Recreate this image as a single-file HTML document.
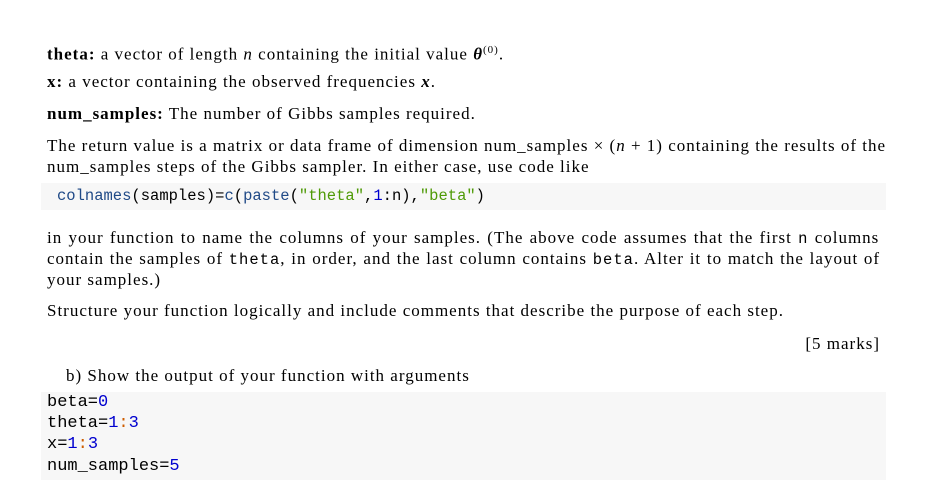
<!DOCTYPE html>
<html><head><meta charset="utf-8"><style>
body{margin:0;width:930px;height:493px;background:#fff;position:relative;font-family:"Liberation Serif",serif;font-size:17px;color:#000;overflow:hidden}
.l{position:absolute;left:47px;white-space:nowrap;line-height:20px;letter-spacing:1px}
.code{position:absolute;left:41px;width:845px;background:#f7f7f7}
.m{font-family:"Liberation Mono",monospace;font-size:15px;letter-spacing:0}
.mi{font-family:"Liberation Mono",monospace;font-size:15.5px;letter-spacing:1px}
.m2{font-family:"Liberation Mono",monospace;font-size:17px;letter-spacing:0}
.fn{color:#204a87}.s{color:#4e9a06}.n{color:#0000cf}.o{color:#ce5c00}
</style></head><body>
<div class="l" style="top:40px"><b>theta:</b> a vector of length <i>n</i> containing the initial value <b><i>θ</i></b><sup style="font-size:11px">(0)</sup>.</div>
<div class="l" style="top:72px"><b>x:</b> a vector containing the observed frequencies <b><i>x</i></b>.</div>
<div class="l" style="top:104px"><b>num_samples:</b> The number of Gibbs samples required.</div>
<div class="l" style="top:136px">The return value is a matrix or data frame of dimension num_samples × (<i>n</i> + 1) containing the results of the</div>
<div class="l" style="top:157px">num_samples steps of the Gibbs sampler. In either case, use code like</div>
<div class="code" style="top:183px;height:27px"></div>
<div class="l m" style="top:186px;left:57px;font-size:15.5px"><span class="fn">colnames</span>(samples)=<span class="fn">c</span>(<span class="fn">paste</span>(<span class="s">"theta"</span>,<span class="n">1</span>:n),<span class="s">"beta"</span>)</div>
<div class="l" style="top:228px;word-spacing:1px">in your function to name the columns of your samples. (The above code assumes that the first <span class="mi">n</span> columns</div>
<div class="l" style="top:249px;word-spacing:0.5px">contain the samples of <span class="mi">theta</span>, in order, and the last column contains <span class="mi">beta</span>. Alter it to match the layout of</div>
<div class="l" style="top:270px">your samples.)</div>
<div class="l" style="top:301px">Structure your function logically and include comments that describe the purpose of each step.</div>
<div class="l" style="top:334px;left:auto;right:50px">[5 marks]</div>
<div class="l" style="top:366px;left:66px">b) Show the output of your function with arguments</div>
<div class="code" style="top:392px;height:88px"></div>
<div class="l m2" style="top:393px">beta=<span class="n">0</span></div>
<div class="l m2" style="top:414px">theta=<span class="n">1</span><span class="o">:</span><span class="n">3</span></div>
<div class="l m2" style="top:435px">x=<span class="n">1</span><span class="o">:</span><span class="n">3</span></div>
<div class="l m2" style="top:457px">num_samples=<span class="n">5</span></div>
</body></html>
